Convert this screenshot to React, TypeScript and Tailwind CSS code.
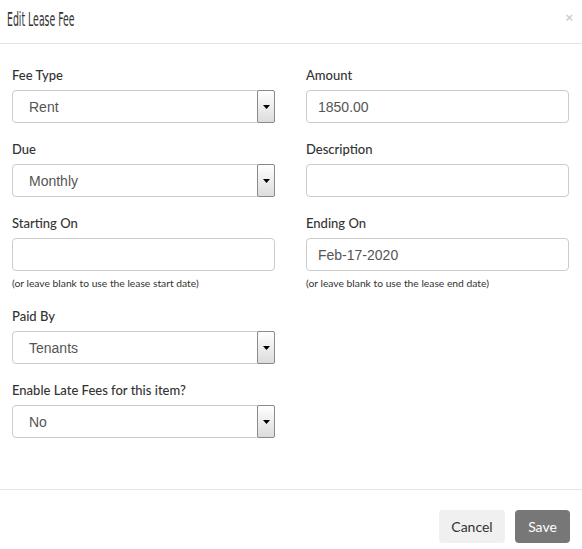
import React from "react";

function Label({ children }: { children: React.ReactNode }) {
  return (
    <div className="h-[20px] leading-[20px] mb-[5px] text-[13px] text-[#333] font-['Lato',sans-serif] font-medium">
      {children}
    </div>
  );
}

function SelectBox({ value }: { value: string }) {
  return (
    <div className="relative h-[33px] border border-[#ccc] rounded-[4px] bg-white flex items-center pl-[16px] pt-[1px] text-[14px] text-[#555] font-['Liberation_Sans',Arial,sans-serif]">
      {value}
      <div className="absolute right-[-1px] top-[-1px] w-[18px] h-[33px] border border-[#8a8a8a] rounded-[2px] bg-gradient-to-b from-white to-[#dcdcdc] flex items-center justify-center">
        <svg width="7" height="4" viewBox="0 0 7 4">
          <path d="M0 0H7L3.5 4Z" fill="#000" />
        </svg>
      </div>
    </div>
  );
}

function InputBox({ value }: { value?: string }) {
  return (
    <div className="h-[33px] border border-[#ccc] rounded-[4px] bg-white flex items-center pl-[11px] pt-[1px] text-[14px] text-[#555] font-['Liberation_Sans',Arial,sans-serif]">
      {value}
    </div>
  );
}

function Help({ children }: { children: React.ReactNode }) {
  return (
    <div className="mt-[5px] h-[14px] leading-[14px] text-[10.3px] text-[#333] font-['Lato',sans-serif]">
      {children}
    </div>
  );
}

export default function App() {
  return (
    <div className="w-[582px] h-[549px] bg-white flex flex-col">
      <div className="h-[44px] border-b border-[#e5e5e5] flex items-start justify-between pl-[7px] pr-[9px] pt-[7px]">
        <div className="h-[24px] leading-[24px] text-[20px] text-[#333] font-['Liberation_Sans_Narrow','DejaVu_Sans_Condensed',sans-serif] inline-block origin-left scale-x-[0.52]">
          Edit Lease Fee
        </div>
        <div className="text-[13px] leading-[22px] font-bold text-[#cfcfcf] font-['Liberation_Sans',Arial,sans-serif]">
          ×
        </div>
      </div>
      <div className="flex-1 px-[12px] pt-[21px] flex flex-col gap-[16px]">
        <div className="grid grid-cols-[263px_263px] gap-x-[31px]">
          <div>
            <Label>Fee Type</Label>
            <SelectBox value="Rent" />
          </div>
          <div>
            <Label>Amount</Label>
            <InputBox value="1850.00" />
          </div>
        </div>
        <div className="grid grid-cols-[263px_263px] gap-x-[31px]">
          <div>
            <Label>Due</Label>
            <SelectBox value="Monthly" />
          </div>
          <div>
            <Label>Description</Label>
            <InputBox />
          </div>
        </div>
        <div className="grid grid-cols-[263px_263px] gap-x-[31px]">
          <div>
            <Label>Starting On</Label>
            <InputBox />
            <Help>(or leave blank to use the lease start date)</Help>
          </div>
          <div>
            <Label>Ending On</Label>
            <InputBox value="Feb-17-2020" />
            <Help>(or leave blank to use the lease end date)</Help>
          </div>
        </div>
        <div className="w-[263px]">
          <Label>Paid By</Label>
          <SelectBox value="Tenants" />
        </div>
        <div className="w-[263px]">
          <Label>Enable Late Fees for this item?</Label>
          <SelectBox value="No" />
        </div>
      </div>
      <div className="h-[60px] border-t border-[#e5e5e5] flex items-start justify-end gap-[10px] pr-[12px] pt-[20px] font-['Lato',sans-serif] text-[14px]">
        <button className="w-[66px] h-[33px] rounded-[4px] bg-[#f0f0f0] text-[#333]">Cancel</button>
        <button className="w-[55px] h-[33px] rounded-[4px] bg-[#777] text-white">Save</button>
      </div>
    </div>
  );
}
